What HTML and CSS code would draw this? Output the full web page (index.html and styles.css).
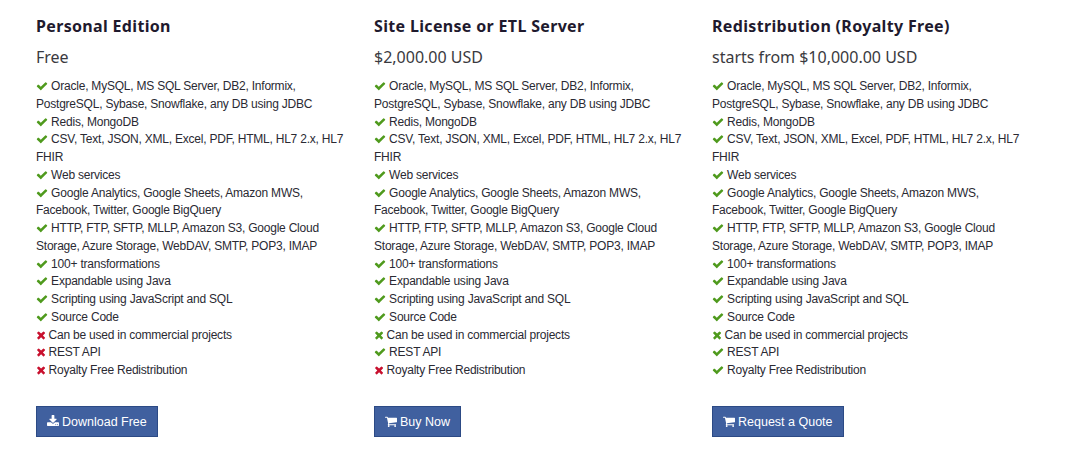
FILE: index.html
```html
<!DOCTYPE html>
<html lang="en">
<head>
<meta charset="utf-8">
<title>Editions</title>
<link rel="stylesheet" href="styles.css">
</head>
<body>
<svg class="sprite" xmlns="http://www.w3.org/2000/svg">
<symbol id="check" viewBox="0 0 1792 1792"><path d="M1671 566q0 40-28 68l-724 724-136 136q-28 28-68 28t-68-28l-136-136-362-362q-28-28-28-68t28-68l136-136q28-28 68-28t68 28l294 295 656-657q28-28 68-28t68 28l136 136q28 28 28 68z"/></symbol>
<symbol id="times" viewBox="132 0 1408 1792"><path d="M1490 1322q0 40-28 68l-136 136q-28 28-68 28t-68-28l-294-294-294 294q-28 28-68 28t-68-28l-136-136q-28-28-28-68t28-68l294-294-294-294q-28-28-28-68t28-68l136-136q28-28 68-28t68 28l294 294 294-294q28-28 68-28t68 28l136 136q28 28 28 68t-28 68l-294 294 294 294q28 28 28 68z"/></symbol>
<symbol id="download" viewBox="64 0 1664 1792"><path d="M1344 1344q0-26-19-45t-45-19-45 19-19 45 19 45 45 19 45-19 19-45zm256 0q0-26-19-45t-45-19-45 19-19 45 19 45 45 19 45-19 19-45zm128-224v320q0 40-28 68t-68 28h-1472q-40 0-68-28t-28-68v-320q0-40 28-68t68-28h465l135 136q58 56 136 56t136-56l136-136h464q40 0 68 28t28 68zm-325-569q17 41-14 70l-448 448q-18 19-45 19t-45-19l-448-448q-31-29-14-70 17-39 59-39h256v-448q0-26 19-45t45-19h256q26 0 45 19t19 45v448h256q42 0 59 39z"/></symbol>
<symbol id="cart" viewBox="64 0 1664 1792"><path d="M704 1536q0 52-38 90t-90 38-90-38-38-90 38-90 90-38 90 38 38 90zm896 0q0 52-38 90t-90 38-90-38-38-90 38-90 90-38 90 38 38 90zm128-1088v512q0 24-16.500 42.500t-40.500 21.500l-1044 122q13 60 13 70 0 16-24 64h920q26 0 45 19t19 45-19 45-45 19h-1024q-26 0-45-19t-19-45q0-11 8-31.500t16-36 21.500-40 15.500-29.500l-177-823h-204q-26 0-45-19t-19-45 19-45 45-19h256q16 0 28.500 6.500t19.500 15.500 13 24.500 8 26 5.500 29.500 4.500 26h1201q26 0 45 19t19 45z"/></symbol>
</svg>
<main class="plans">
  <section class="plan">
    <h2 class="plan-title">Personal Edition</h2>
    <p class="plan-price">Free</p>
    <ul class="features">
      <li><svg class="i yes w"><use href="#check"/></svg> Oracle, MySQL, MS SQL Server, DB2, Informix, PostgreSQL, Sybase, Snowflake, any DB using JDBC</li>
      <li><svg class="i yes w"><use href="#check"/></svg> Redis, MongoDB</li>
      <li><svg class="i yes w"><use href="#check"/></svg> CSV, Text, JSON, XML, Excel, PDF, HTML, HL7 2.x, HL7 FHIR</li>
      <li><svg class="i yes w"><use href="#check"/></svg> Web services</li>
      <li><svg class="i yes w"><use href="#check"/></svg> Google Analytics, Google Sheets, Amazon MWS, Facebook, Twitter, Google BigQuery</li>
      <li><svg class="i yes w"><use href="#check"/></svg> HTTP, FTP, SFTP, MLLP, Amazon S3, Google Cloud Storage, Azure Storage, WebDAV, SMTP, POP3, IMAP</li>
      <li><svg class="i yes w"><use href="#check"/></svg> 100+ transformations</li>
      <li><svg class="i yes w"><use href="#check"/></svg> Expandable using Java</li>
      <li><svg class="i yes w"><use href="#check"/></svg> Scripting using JavaScript and SQL</li>
      <li><svg class="i yes w"><use href="#check"/></svg> Source Code</li>
      <li><svg class="i no n"><use href="#times"/></svg> Can be used in commercial projects</li>
      <li><svg class="i no n"><use href="#times"/></svg> REST API</li>
      <li><svg class="i no n"><use href="#times"/></svg> Royalty Free Redistribution</li>
    </ul>
    <a class="btn" href="#"><svg class="b"><use href="#download"/></svg> Download Free</a>
  </section>
  <section class="plan">
    <h2 class="plan-title">Site License or ETL Server</h2>
    <p class="plan-price">$2,000.00 USD</p>
    <ul class="features">
      <li><svg class="i yes w"><use href="#check"/></svg> Oracle, MySQL, MS SQL Server, DB2, Informix, PostgreSQL, Sybase, Snowflake, any DB using JDBC</li>
      <li><svg class="i yes w"><use href="#check"/></svg> Redis, MongoDB</li>
      <li><svg class="i yes w"><use href="#check"/></svg> CSV, Text, JSON, XML, Excel, PDF, HTML, HL7 2.x, HL7 FHIR</li>
      <li><svg class="i yes w"><use href="#check"/></svg> Web services</li>
      <li><svg class="i yes w"><use href="#check"/></svg> Google Analytics, Google Sheets, Amazon MWS, Facebook, Twitter, Google BigQuery</li>
      <li><svg class="i yes w"><use href="#check"/></svg> HTTP, FTP, SFTP, MLLP, Amazon S3, Google Cloud Storage, Azure Storage, WebDAV, SMTP, POP3, IMAP</li>
      <li><svg class="i yes w"><use href="#check"/></svg> 100+ transformations</li>
      <li><svg class="i yes w"><use href="#check"/></svg> Expandable using Java</li>
      <li><svg class="i yes w"><use href="#check"/></svg> Scripting using JavaScript and SQL</li>
      <li><svg class="i yes w"><use href="#check"/></svg> Source Code</li>
      <li><svg class="i yes n"><use href="#times"/></svg> Can be used in commercial projects</li>
      <li><svg class="i yes w"><use href="#check"/></svg> REST API</li>
      <li><svg class="i no n"><use href="#times"/></svg> Royalty Free Redistribution</li>
    </ul>
    <a class="btn" href="#"><svg class="b"><use href="#cart"/></svg> Buy Now</a>
  </section>
  <section class="plan">
    <h2 class="plan-title">Redistribution (Royalty Free)</h2>
    <p class="plan-price">starts from $10,000.00 USD</p>
    <ul class="features">
      <li><svg class="i yes w"><use href="#check"/></svg> Oracle, MySQL, MS SQL Server, DB2, Informix, PostgreSQL, Sybase, Snowflake, any DB using JDBC</li>
      <li><svg class="i yes w"><use href="#check"/></svg> Redis, MongoDB</li>
      <li><svg class="i yes w"><use href="#check"/></svg> CSV, Text, JSON, XML, Excel, PDF, HTML, HL7 2.x, HL7 FHIR</li>
      <li><svg class="i yes w"><use href="#check"/></svg> Web services</li>
      <li><svg class="i yes w"><use href="#check"/></svg> Google Analytics, Google Sheets, Amazon MWS, Facebook, Twitter, Google BigQuery</li>
      <li><svg class="i yes w"><use href="#check"/></svg> HTTP, FTP, SFTP, MLLP, Amazon S3, Google Cloud Storage, Azure Storage, WebDAV, SMTP, POP3, IMAP</li>
      <li><svg class="i yes w"><use href="#check"/></svg> 100+ transformations</li>
      <li><svg class="i yes w"><use href="#check"/></svg> Expandable using Java</li>
      <li><svg class="i yes w"><use href="#check"/></svg> Scripting using JavaScript and SQL</li>
      <li><svg class="i yes w"><use href="#check"/></svg> Source Code</li>
      <li><svg class="i yes n"><use href="#times"/></svg> Can be used in commercial projects</li>
      <li><svg class="i yes w"><use href="#check"/></svg> REST API</li>
      <li><svg class="i yes w"><use href="#check"/></svg> Royalty Free Redistribution</li>
    </ul>
    <a class="btn" href="#"><svg class="b"><use href="#cart"/></svg> Request a Quote</a>
  </section>
</main>
</body>
</html>
```
FILE: styles.css
```css
html, body { margin: 0; padding: 0; background: #fff; }
body {
  font-family: "Liberation Sans", Arial, sans-serif;
  font-size: 12px;
  color: #2a2a33;
  overflow: hidden;
}
.sprite { display: none; }
.plans {
  display: grid;
  grid-template-columns: repeat(3, 308px);
  column-gap: 30px;
  padding: 16px 0 0 36px;
}
.plan-title {
  margin: 0;
  font-family: "Noto Sans", "Open Sans", sans-serif;
  font-size: 16px;
  font-weight: 700;
  line-height: 20px;
  letter-spacing: 0.33px;
  color: #1f1a2e;
}
.plan-price {
  margin: 10px 0 0;
  font-family: "Noto Sans", "Open Sans", sans-serif;
  font-size: 16px;
  line-height: 22px;
  color: #3a3a40;
}
.features {
  list-style: none;
  margin: 10px 0 0;
  padding: 0;
  line-height: 17.76px;
  letter-spacing: -0.22px;
}
.i { display: inline-block; height: 12px; fill: currentColor; vertical-align: -2px; }
.w { width: 12px; }
.n { width: 9.4px; }
.yes { color: #4f9a1d; }
.no { color: #c8102e; }
.btn {
  display: inline-flex;
  align-items: center;
  gap: 3px;
  margin-top: 26px;
  height: 31px;
  box-sizing: border-box;
  padding: 0 10px;
  background: #40609f;
  border: 1px solid #2c4a85;
  color: #fff;
  font-size: 12.500px;
  text-decoration: none;
}
.b { width: 12px; height: 12.900px; fill: #fff; }
```
